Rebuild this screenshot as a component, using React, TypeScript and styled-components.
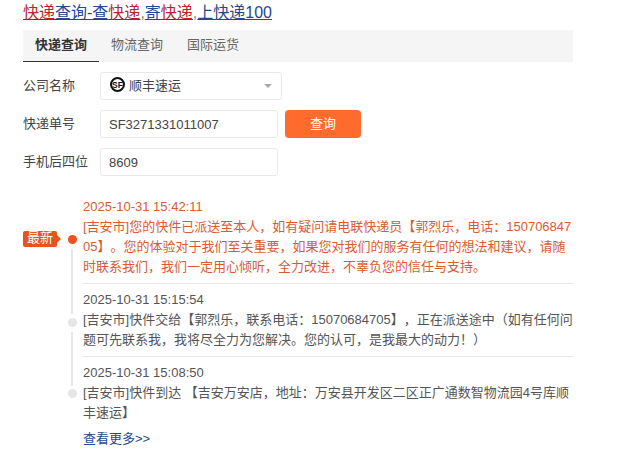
import { createGlobalStyle, styled } from 'styled-components'

const GlobalStyle = createGlobalStyle`
  html, body {
    margin: 0;
    padding: 0;
    background: #fff;
  }
  body {
    font-family: "Liberation Sans", "Noto Sans CJK SC", sans-serif;
    font-size: 13px;
    color: #555;
    text-spacing-trim: space-all;
  }
`

const tracks = [
  {
    time: '2025-10-31 15:42:11',
    text: '[吉安市]您的快件已派送至本人，如有疑问请电联快递员【郭烈乐，电话：15070684705】。您的体验对于我们至关重要，如果您对我们的服务有任何的想法和建议，请随时联系我们，我们一定用心倾听，全力改进，不辜负您的信任与支持。'
  },
  {
    time: '2025-10-31 15:15:54',
    text: '[吉安市]快件交给【郭烈乐，联系电话：15070684705】，正在派送途中（如有任何问题可先联系我，我将尽全力为您解决。您的认可，是我最大的动力！）'
  },
  {
    time: '2025-10-31 15:08:50',
    text: '[吉安市]快件到达 【吉安万安店，地址：万安县开发区二区正广通数智物流园4号库顺丰速运】'
  }
]

export default function App() {
  return (
    <>
      <GlobalStyle />
      <Page>
        <Title>
          <TitleLink href="#">
            <Red>快递</Red>查询-查<Red>快递</Red>
          </TitleLink>
          <Comma>,</Comma>
          <TitleLink href="#">
            寄<Red>快递</Red>
          </TitleLink>
          <Comma>,</Comma>
          <TitleLink href="#">上快递100</TitleLink>
        </Title>

        <Tabs>
          <Tab $active>快递查询</Tab>
          <Tab>物流查询</Tab>
          <Tab>国际运货</Tab>
        </Tabs>

        <Form>
          <Row>
            <Label>公司名称</Label>
            <Select>
              <svg width="15" height="15" viewBox="0 0 16 16">
                <circle cx="8" cy="8" r="6.9" fill="#fff" stroke="#111" strokeWidth="2.2" />
                <text x="8" y="11.2" fontSize="9" fontWeight="700" textAnchor="middle" fill="#111">
                  SF
                </text>
              </svg>
              <span>顺丰速运</span>
              <Caret />
            </Select>
          </Row>
          <Row>
            <Label>快递单号</Label>
            <Field>SF3271331011007</Field>
            <Submit>查询</Submit>
          </Row>
          <Row>
            <Label>手机后四位</Label>
            <Field>8609</Field>
          </Row>
        </Form>

        <Timeline>
          {tracks.map((t, i) => (
            <Item key={t.time} $latest={i === 0}>
              <Rail>
                {i === 0 && <Badge>最新</Badge>}
                <Dot $latest={i === 0} $last={i === tracks.length - 1} />
              </Rail>
              <Body $last={i === tracks.length - 1}>
                <div>{t.time}</div>
                <div>{t.text}</div>
              </Body>
            </Item>
          ))}
        </Timeline>
        <More href="#">查看更多&gt;&gt;</More>
      </Page>
    </>
  )
}

const Page = styled.div`
  width: 550px;
  padding: 0 0 0 23px;
`

const Title = styled.div`
  height: 30px;
  padding-top: 2px;
  box-sizing: border-box;
  font-size: 16px;
  line-height: 22px;
  color: #24478f;
  white-space: nowrap;
`

const TitleLink = styled.a`
  color: #24478f;
  text-decoration: underline;
`

const Red = styled.span`
  color: #b9242c;
`

const Comma = styled.span`
  color: #888;
`

const Tabs = styled.div`
  display: flex;
  height: 32px;
  background: #f5f5f5;
`

const Tab = styled.div<{ $active?: boolean }>`
  box-sizing: border-box;
  width: 76px;
  padding-bottom: 1px;
  line-height: 29px;
  text-align: center;
  color: ${p => (p.$active ? '#333' : '#666')};
  font-weight: ${p => (p.$active ? 700 : 400)};
  border-bottom: 1px solid ${p => (p.$active ? '#333' : 'transparent')};
`

const Form = styled.div`
  display: flex;
  flex-direction: column;
  gap: 10px;
  padding-top: 10px;
`

const Row = styled.div`
  display: flex;
  align-items: center;
  height: 28px;
`

const Label = styled.div`
  width: 77px;
  padding-bottom: 3px;
  color: #444;
  white-space: nowrap;
`

const Select = styled.div`
  box-sizing: border-box;
  display: flex;
  align-items: center;
  gap: 4px;
  width: 182px;
  height: 28px;
  padding: 0 9px 3px;
  border: 1px solid #e8e8e8;
  border-radius: 3px;
  color: #444;
`

const Caret = styled.i`
  margin: 3px 0 0 auto;
  width: 0;
  height: 0;
  border-left: 4px solid transparent;
  border-right: 4px solid transparent;
  border-top: 4px solid #aaa;
`

const Field = styled.div`
  box-sizing: border-box;
  width: 178px;
  height: 28px;
  padding: 1px 8px 0;
  line-height: 26px;
  border: 1px solid #e8e8e8;
  border-radius: 3px;
  font-size: 13px;
  color: #444;
`

const Submit = styled.button`
  width: 76px;
  height: 28px;
  margin-left: 7px;
  padding: 0 0 3px;
  border: 0;
  border-radius: 4px;
  background: #ff6b2c;
  color: #fff;
  font: inherit;
`

const Timeline = styled.div`
  padding-top: 18px;
  width: 550px;
`

const Item = styled.div<{ $latest?: boolean }>`
  display: flex;
  color: ${p => (p.$latest ? '#d85c32' : '#555')};
`

const Rail = styled.div`
  display: flex;
  flex: none;
  align-items: center;
  justify-content: space-between;
  width: 54px;
  margin-right: 6px;
  padding-bottom: 3px;
`

const Badge = styled.div`
  position: relative;
  width: 34px;
  height: 16px;
  line-height: 13px;
  border-radius: 2px;
  background: #e8521c;
  color: #fff;
  text-align: center;
  &::after {
    content: '';
    position: absolute;
    left: 100%;
    top: 4px;
    border-left: 4px solid #e8521c;
    border-top: 4px solid transparent;
    border-bottom: 4px solid transparent;
  }
`

const Dot = styled.div<{ $latest?: boolean; $last?: boolean }>`
  position: relative;
  width: 9px;
  height: 9px;
  margin-left: auto;
  border-radius: 50%;
  background: ${p => (p.$latest ? '#f0501c' : '#e6e6e6')};
  &::after {
    content: '';
    display: ${p => (p.$last ? 'none' : 'block')};
    position: absolute;
    left: 3px;
    top: 14px;
    width: 2px;
    height: ${p => (p.$latest ? '65px' : '54px')};
    background: #e8e8e8;
  }
`

const Body = styled.div<{ $last?: boolean }>`
  flex: 1;
  min-width: 0;
  padding: 3px 0 6px;
  margin-bottom: ${p => (p.$last ? '0' : '3px')};
  line-height: 20px;
  word-break: break-all;
  border-bottom: ${p => (p.$last ? '0' : '1px solid #e8e8e8')};
`

const More = styled.a`
  display: block;
  margin-left: 60px;
  line-height: 20px;
  color: #24478f;
  text-decoration: none;
`
